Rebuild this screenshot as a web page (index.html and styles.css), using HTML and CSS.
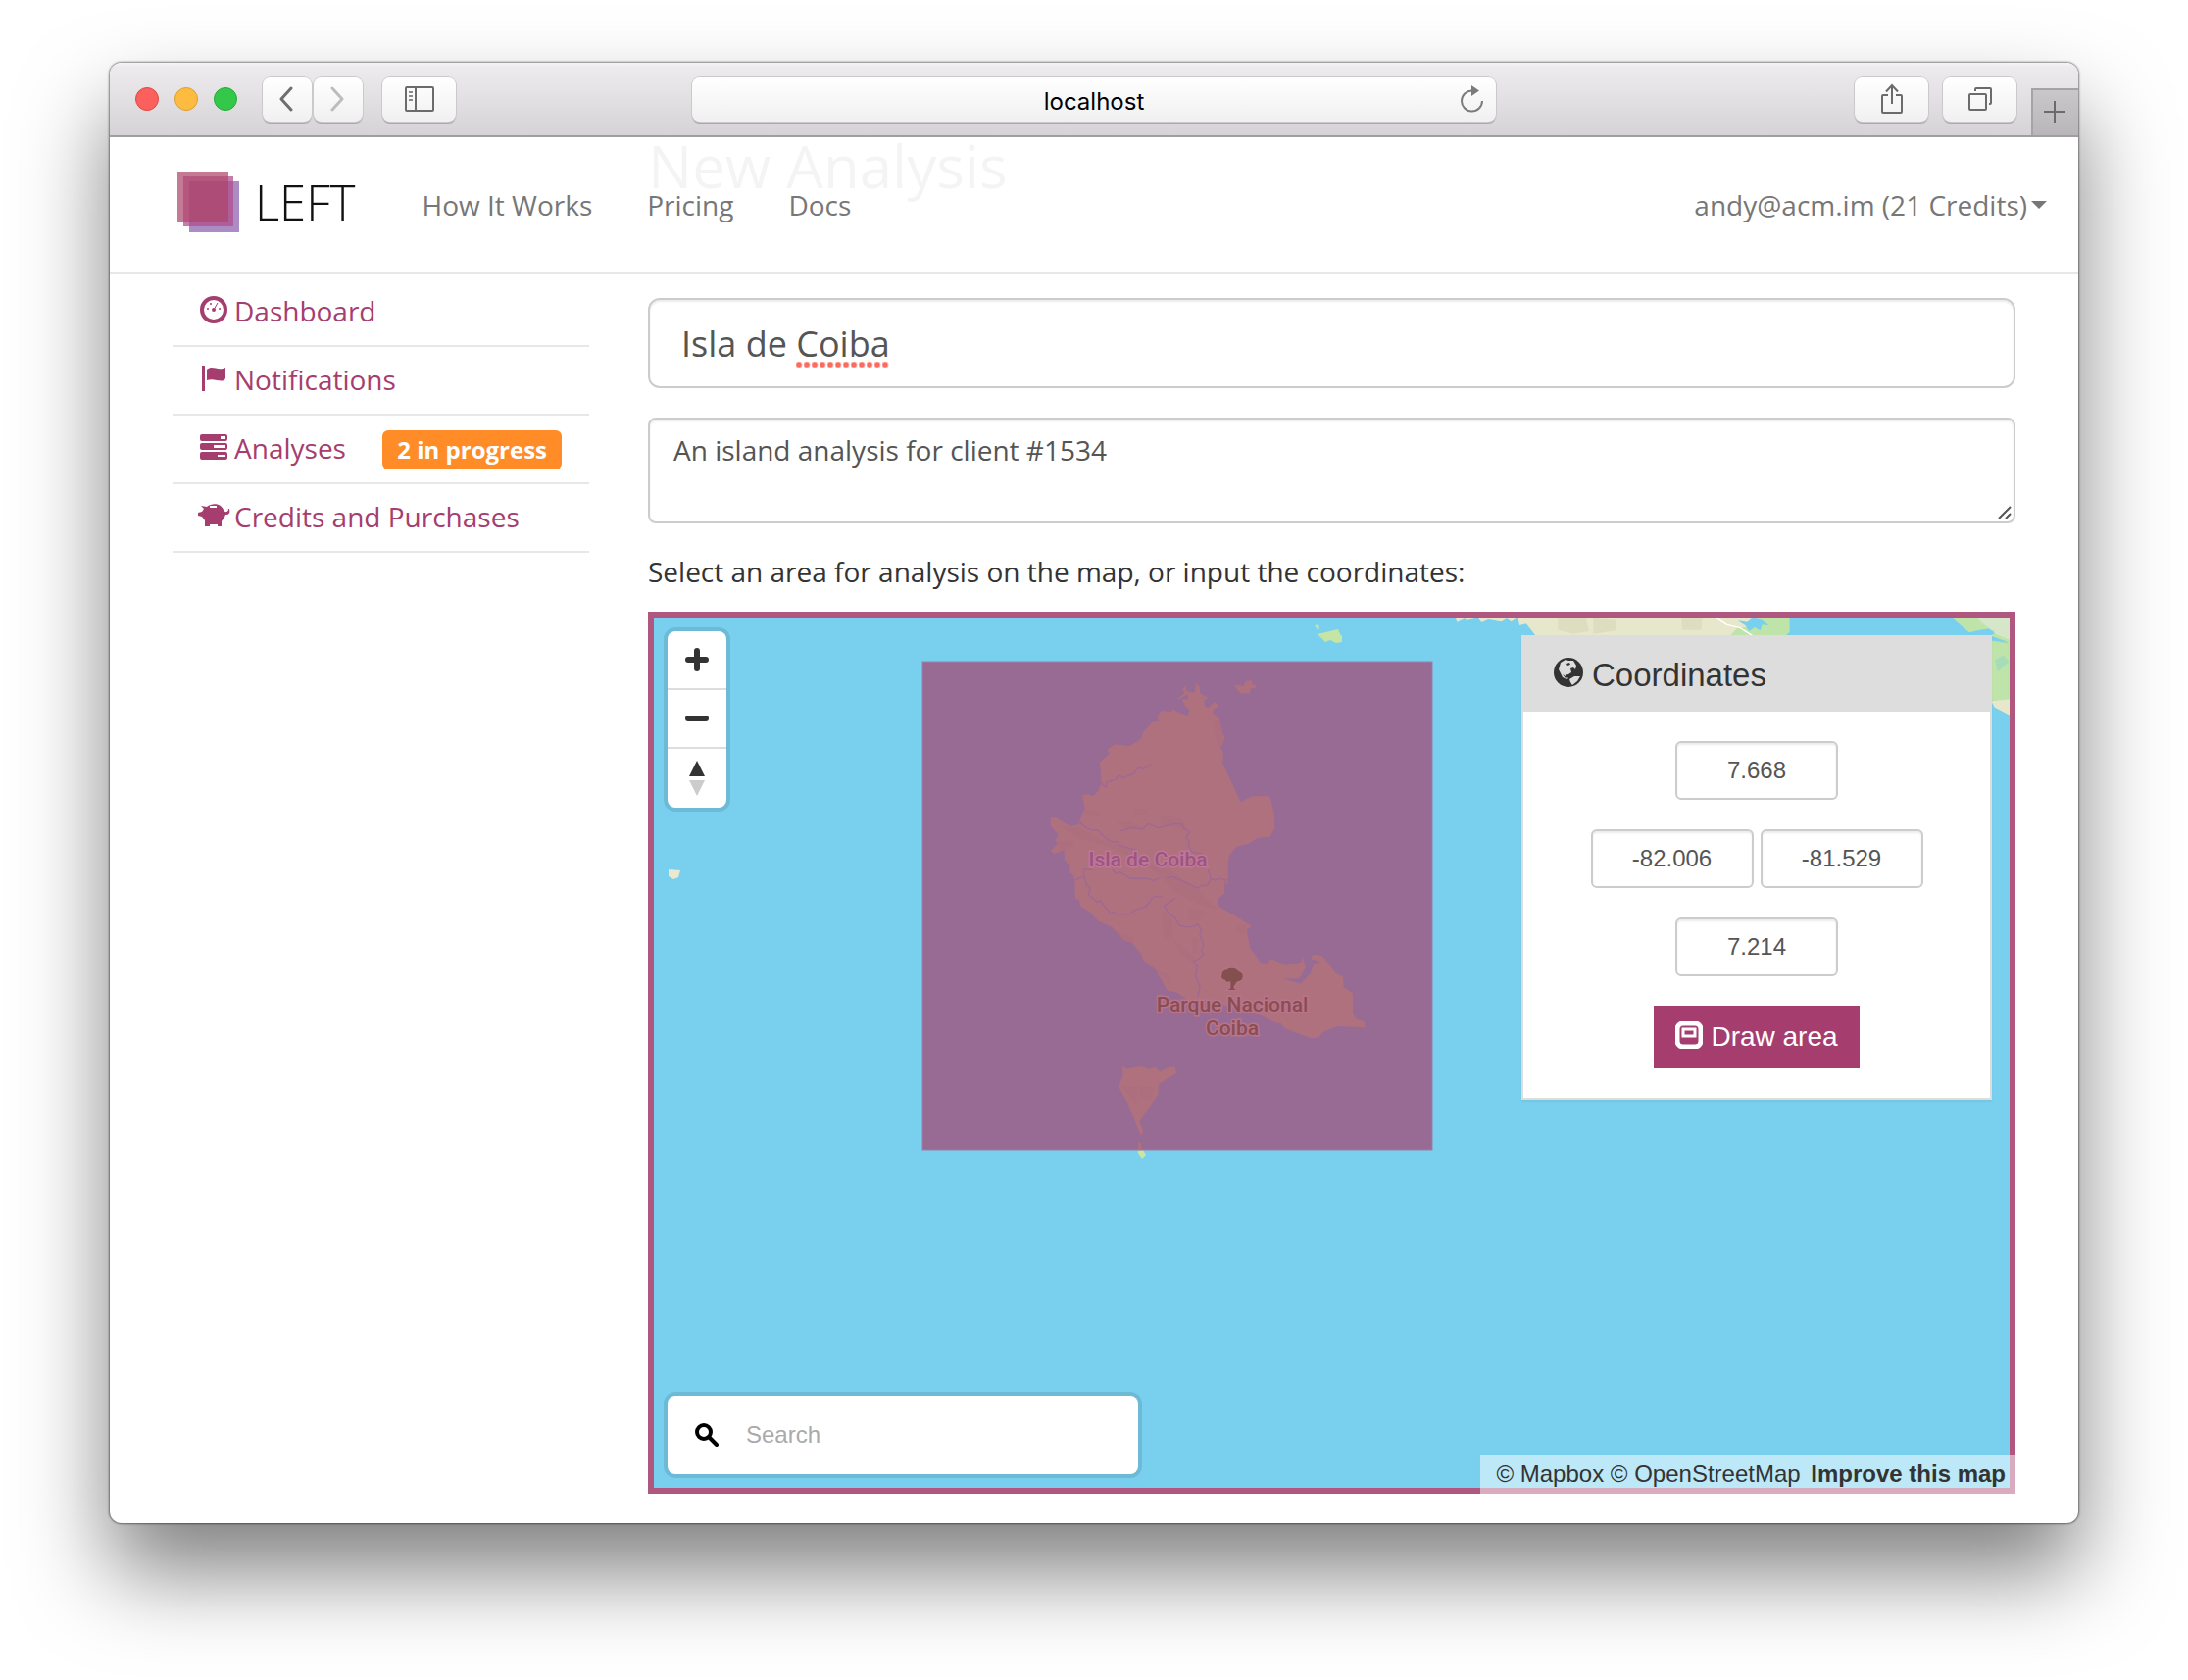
FILE: index.html
```html
<!DOCTYPE html>
<html lang="en">
<head>
<meta charset="utf-8">
<title>New Analysis - LEFT</title>
<link rel="stylesheet" href="styles.css">
</head>
<body>
<div class="window">
  <header class="toolbar">
    <div class="toolbar-left">
      <div class="lights"><span class="light light-red"></span><span class="light light-yellow"></span><span class="light light-green"></span></div>
      <div class="history">
        <button class="tool-button tool-history" type="button" aria-label="Back"><svg width="14" height="26" viewBox="0 0 14 26" fill="none" stroke="#6e6e6e" stroke-width="3" stroke-linecap="round" stroke-linejoin="round"><path d="M12 2 2 13l10 11"/></svg></button>
        <button class="tool-button tool-history" type="button" aria-label="Forward"><svg width="14" height="26" viewBox="0 0 14 26" fill="none" stroke="#bdbdbd" stroke-width="3" stroke-linecap="round" stroke-linejoin="round"><path d="M2 2l10 11L2 24"/></svg></button>
      </div>
      <button class="tool-button" type="button" aria-label="Show sidebar"><svg width="30" height="26" viewBox="0 0 30 26" fill="none" stroke="#6b6b6b" stroke-width="2"><rect x="1" y="1" width="28" height="24" rx="1"/><path d="M11 1v24"/><path stroke="#8a8a8a" d="M4 6h4M4 10h4M4 14h4"/></svg></button>
    </div>
    <div class="address">
      <span class="address-text">localhost</span>
      <button class="reload" type="button" aria-label="Reload"><svg width="24" height="28" viewBox="0 0 24 28"><path d="M22 16a10.5 10.5 0 1 1-10-10.500" fill="none" stroke="#7b7b7b" stroke-width="2"/><path d="M11 0l8 5.500L11 11z" fill="#7b7b7b"/></svg></button>
    </div>
    <div class="toolbar-right">
      <button class="tool-button" type="button" aria-label="Share"><svg width="24" height="32" viewBox="0 0 24 32" fill="none" stroke="#6b6b6b" stroke-width="2"><path d="M8 12H3a1 1 0 0 0-1 1v16a1 1 0 0 0 1 1h18a1 1 0 0 0 1-1V13a1 1 0 0 0-1-1h-5M12 21V2M6 8.500 12 2l6 6.500"/></svg></button>
      <button class="tool-button" type="button" aria-label="Show all tabs"><svg width="26" height="26" viewBox="0 0 26 26" fill="none" stroke="#6b6b6b" stroke-width="2"><rect x="2" y="8" width="17" height="16" rx="1"/><path d="M8 5V3a1 1 0 0 1 1-1h14a1 1 0 0 1 1 1v14a1 1 0 0 1-1 1h-1"/></svg></button>
      <button class="new-tab" type="button" aria-label="New tab"><svg width="22" height="22" viewBox="0 0 22 22" stroke="#6b6b6b" stroke-width="2"><path d="M11 0v22M0 11h22"/></svg></button>
    </div>
  </header>

  <div class="page">
    <nav class="navbar">
      <a class="brand" href="#">
        <svg width="63" height="62" viewBox="0 0 63 62"><rect x="12" y="10" width="51" height="52" fill="#ab8cc4"/><rect x="6" y="5" width="51" height="51" fill="#b04b8a" fill-opacity=".72"/><rect width="52" height="51" fill="#b04a70" fill-opacity=".74"/><rect x="12" y="10" width="40" height="41" fill="#ae4c78"/></svg>
        <span>LEFT</span>
      </a>
      <a class="nav-link" href="#">How It Works</a>
      <a class="nav-link" href="#">Pricing</a>
      <a class="nav-link" href="#">Docs</a>
      <a class="nav-link nav-user" href="#">andy@acm.im (21 Credits)<span class="caret"></span></a>
    </nav>

    <div class="columns">
      <aside class="sidebar">
        <a class="side-link" href="#"><svg class="side-icon" viewBox="0 0 28 28"><circle cx="14" cy="14" r="12" fill="none" stroke="currentColor" stroke-width="4"/><g fill="currentColor"><circle cx="14" cy="14" r="2"/><circle cx="8" cy="13" r="1"/><circle cx="11" cy="8" r="1"/><circle cx="20" cy="13" r="1"/></g><path d="M14 14l4-7" stroke="currentColor" stroke-width="1"/></svg>Dashboard</a>
        <a class="side-link" href="#"><svg class="side-icon" viewBox="0 0 28 28" fill="currentColor"><path d="M2 1h3v26H2zM7 5c6-5 11 2 19-2v11c-3 6-11-1-19 2z"/></svg>Notifications</a>
        <a class="side-link" href="#"><svg class="side-icon" viewBox="0 0 28 28"><g fill="currentColor"><rect y="1" width="28" height="7" rx="2"/><rect y="10" width="28" height="7" rx="2"/><rect y="19" width="28" height="8" rx="2"/></g><path d="M21 3h5v3h-5zM14 12h12v3H14zM18 22h8v2h-8z" fill="#fff"/></svg>Analyses <span class="badge">2 in progress</span></a>
        <a class="side-link" href="#"><svg class="side-icon" viewBox="0 0 28 28"><path d="M1 4l6 1C12 1 21 1 24 8c1 3 5 3 5-1h1c1 4 0 6-4 6-1 4-3 5-4 7v5h-4v-2h-8v2H5v-6l-3-4-4-1v-3l4-1 2-3z" fill="currentColor"/><path d="M10 4h7v2h-7z" fill="#fff"/></svg>Credits and Purchases</a>
      </aside>

      <main class="main">
        <h1 class="page-title">New Analysis</h1>
        <form class="form">
          <div class="field">
            <input class="control control-large" type="text" value="Isla de Coiba" aria-label="Analysis name" spellcheck="false">
            <span class="misspelling"></span>
          </div>
          <div class="field">
            <textarea class="control control-area" aria-label="Description" spellcheck="false">An island analysis for client #1534</textarea>
            <svg class="grip" width="14" height="14" viewBox="0 0 14 14" stroke="#555" stroke-width="2"><path d="M1 13 13 1M8 13l5-5"/></svg>
          </div>
          <p class="hint">Select an area for analysis on the map, or input the coordinates:</p>

          <div class="map">
            <svg class="map-canvas" viewBox="661 624 1395 900" preserveAspectRatio="xMinYMin slice">
              <rect x="661" y="624" width="1395" height="900" fill="#79d0ee"/>
              <path d="M682 887l12 1-2 7-5 2-5-3z" fill="#ebe8d2"/>
              <path d="M1341 638l4-1 1 4-2 2z" fill="#b8e4b4"/>
              <path d="M1344 647l21-5 2 5 2 2v6l-6 1-6-3-5 2z" fill="#c5e5a4"/>
              <g transform="translate(1480 610) scale(.3827 .3333)">
                <path d="M0 60l12 0 5 14 20-11 5 6 30-8 10 14 18-9 35 7 14-10 12 10 18-14 4 25 18-5 24 35H800L903 60z" fill="#e7e7cb"/>
                <path d="M285 62l75 0 8 40-42 8-40-12zM615 62h55l-2 36h-52zM380 62l62 6-4 32-58 10z" fill="#deddc0"/>
                <path d="M903 60v45l-10 10H745l20-25 30 0 30-30z" fill="#bfe4aa"/>
                <path d="M765 70l25 4 15-14 25 8 18 16-18-2-5 18-15-10-15 12-10-18z" fill="#79d0ee"/>
                <path d="M700 56l36 26 36 10 35 26" fill="none" stroke="#fff" stroke-width="4"/>
                <path d="M1336 60h156v300l-42-26-10-30V114l20-10-25-10-25 4-28 8-20-20z" fill="#bfe4aa"/>
                <path d="M1400 60h92v70l-40-20z" fill="#d6e6c9"/>
                <path d="M1440 316l52-6v50l-42-25z" fill="#e7e7cb"/>
                <path d="M1442 120l40 12 4 8-44-8zM1450 190l24-14 14 20-30 30z" fill="#a6dcb6"/>
                <path d="M1410 108l40-8-15 14 50 22-45-6-4-14z" fill="#79d0ee"/>
              </g>
              <path d="M1161 1170l3 0 5 8-4 4-4-6z" fill="#c9e6a4"/>
              <rect x="941" y="675" width="520" height="498" fill="#986b95"/>
              <rect x="941" y="675" width="520" height="498" fill="none" stroke="#9881a9"/>
              <g transform="translate(1000 660) scale(.3333 .3444)">
                <g fill="#b0717f">
                  <path d="M603 153L625 138 619 122 628 115 632 132 656 136 660 107 671 116 673 138 698 150 684 160 688 177 698 180 717 163 731 174 712 186V197L733 215 742 258 749 265 742 285 735 298 743 310 742 345 797 460 832 442H886L900 495 901 535 887 562 848 566 820 583 783 592 762 618 759 640 757 702 747 707V730L729 745V768L831 827 815 838 826 893 858 934 877 939 890 924 937 944 982 934 987 919 996 950 975 983 927 982 980 998 1010 968 1022 937 1046 936 1014 924V915L1027 911 1047 916 1088 966 1110 978 1112 1008 1140 1026V1085L1150 1102 1175 1110 1178 1127 1095 1124 1050 1140 1036 1156 1014 1159 932 1130 920 1114 910 1116 865 1094 750 1062 700 1045 640 1048 597 1021 573 1019 538 958 499 928 492 909 465 876 440 870 403 830 361 812 335 785 307 768 302 748H291L289 692 283 672 273 668 276 650 259 632 256 602 225 613 216 605 236 583 229 573 240 557 215 529V506H232L276 531 300 526 320 478 312 440 327 436 344 442 360 428 371 403 366 342 397 315 388 306 411 288 457 294 491 273 498 253 527 223 546 221 541 206 555 189 587 192V183L605 194 635 203 640 186 627 176 618 155H636L634 140 605 156Z"/>
                  <path d="M777 112l28 4 8-15 17-2 3 12 14 5-8 7-10-1-5 16-25-1-12-9z"/>
                  <path d="M435 1242l12 8 43-7 27 8 18-6 15 14 27-14h19l4 18-54 32-2 30-57 82 12 28-8 14-37-92-31-55 13-30z"/>
                  <path d="M484 1465l9 8-1 17h-8z"/>
                </g>
                <g fill="#a96b7b" fill-opacity=".5">
                  <path d="M240 530l60 5 70 38 90 25 65 48 60 20 70 45 70 65-40-7-85-40-60-60-80-50-90-35-70-18z"/>
                  <path d="M712 220l22 0 8 40-8 38-12-28zM320 478l46 10-3 18-40-8zM555 500l60 8 20 38-60-18-20 8zM413 515l45 5 40 15-50 8zM470 480h35l10 15-42 5zM237 576l50-2-5 18-35 14zM400 830l35 22 30 8 5 18-30-6zM556 785l30 22 5 60-28-7zM585 860l70 60-3 15-40-22zM640 775l50 8-20 28-35-6zM430 1300l50 5-2 50zM485 1300l45 5-5 40-40-8z"/>
                  <path d="M515 935l30 25 35 12 5 25-45-38zM650 860l18 8-5 40-15-6zM785 830l32-8-10 26-22 2z"/>
                </g>
                <g fill="none" stroke="#9f6893" stroke-width="4" stroke-linejoin="round">
                  <path d="M368 402l16 13 4-15 25-6 11-14 14 8 32-14 14-16 15 3 25-13"/>
                  <path d="M302 518l18 15 22 10h18l22 22 20 12h16l6 10 54 15M430 545l32-10 33 6 20-17 30 12 45-11h25l10 15 16 8-12 17 12 12-4 14 13 18 32 3"/>
                  <path d="M289 692l28-13-1-20 30 2M404 658l12 14 10-6 34 20h50l20 6 20-7M568 686l20-6 78 35 10-8h18l12-20 14 4 8-6 24 6-3 15M706 688l-9-28"/>
                  <path d="M317 679l10 30 10 3-6 22 28 22 8-4 26 32 5 8 9-8 10 8 40 0 16-12 35-12 22-28h30M597 745l-34 21 13 24 20 12 12 22 24 6 22-2 12-8 10 18-4 16 12 30-8 14 8 12-12 12-20 10 12 14-5 30 14 30-8 30"/>
                </g>
                <path d="M768 952c14-2 18 6 24 10 12 2 14 16 8 24-8 6-12 4-16 8l-8 12v6l8 4h-26l8-5v-20c-12 4-16-2-18-6-10 0-12-10-8-14-2-8 8-16 14-14 6-6 10-4 14-5z" fill="#83504f" stroke="#b97287" stroke-width="6" paint-order="stroke"/>
              </g>
              <g class="map-label">
                <text x="1171" y="884" class="map-label-island">Isla de Coiba</text>
                <text x="1257" y="1032">Parque Nacional</text>
                <text x="1257" y="1056">Coiba</text>
              </g>
            </svg>

            <div class="zoom">
              <button class="zoom-button" type="button" aria-label="Zoom in"><svg width="24" height="24" viewBox="0 0 24 24" stroke="#333" stroke-width="6" stroke-linecap="round"><path d="M12 3v18M3 12h18"/></svg></button>
              <button class="zoom-button" type="button" aria-label="Zoom out"><svg width="24" height="24" viewBox="0 0 24 24" stroke="#333" stroke-width="6" stroke-linecap="round"><path d="M3 12h18"/></svg></button>
              <button class="zoom-button" type="button" aria-label="Reset north"><svg width="16" height="36" viewBox="0 0 16 36"><path d="M8 0l8 16H0z" fill="#333"/><path d="M8 36 0 20h16z" fill="#ccc"/></svg></button>
            </div>

            <section class="panel">
              <h2 class="panel-title"><svg width="32" height="32" viewBox="0 0 32 32"><circle cx="16" cy="16" r="15" fill="#333"/><path d="M8 6l5-3 3 1 5 0 3 5-1 4-2-2-3 1 1 4-3 2-3 1 3 3-2 1-4-2-2-4-2-4zM17 23l5-3 6 0-3 5-5 4-2-3z" fill="#ddd"/><path d="M14 7l3-1 1 2-3 1zM10 18l3 2 2-2 1 3-3 1z" fill="#333"/></svg>Coordinates</h2>
              <div class="panel-body">
                <input class="coord" type="text" value="7.668" aria-label="North">
                <div class="coord-row">
                  <input class="coord" type="text" value="-82.006" aria-label="West">
                  <input class="coord" type="text" value="-81.529" aria-label="East">
                </div>
                <input class="coord" type="text" value="7.214" aria-label="South">
                <button class="draw" type="button"><svg width="28" height="28" viewBox="0 0 28 28" fill="none" stroke="#fff"><rect x="2" y="2" width="24" height="24" rx="6" stroke-width="5"/><rect x="8" y="8" width="12" height="7" stroke-width="3"/></svg>Draw area</button>
              </div>
            </section>

            <label class="search">
              <svg width="24" height="24" viewBox="0 0 24 24" fill="none" stroke="#000"><circle cx="9" cy="9" r="7" stroke-width="4"/><path d="M14 14l8 8" stroke-width="4" stroke-linecap="round"/></svg>
              <input class="search-input" type="text" placeholder="Search" aria-label="Search">
            </label>

            <div class="attribution"><a href="#">© Mapbox</a> <a href="#">© OpenStreetMap</a> <a class="improve" href="#">Improve this map</a></div>
          </div>
        </form>
      </main>
    </div>
  </div>
</div>
</body>
</html>
```
FILE: styles.css
```css
* { box-sizing: border-box; }

body {
  margin: 0;
  padding: 64px 112px 160px;
  background: #fff;
  color: #333;
  font: 28px/38px "Open Sans", "Noto Sans", sans-serif;
}

a { color: inherit; text-decoration: none; }
button, input, textarea { font: inherit; color: inherit; margin: 0; }
button { border: 0; padding: 0; cursor: pointer; }
svg { display: block; flex: none; }

.window {
  border-radius: 12px;
  background: #fff;
  box-shadow: 0 0 2px 1px rgba(0, 0, 0, .45), 0 50px 90px rgba(0, 0, 0, .5);
}

/* Browser toolbar */
.toolbar {
  display: grid;
  grid-template-columns: 1fr 820px 1fr;
  align-items: center;
  height: 76px;
  border-bottom: 2px solid #a09ea2;
  border-radius: 12px 12px 0 0;
  background: linear-gradient(#f6f6f6, #edebee 4px, #d5d3d6);
}
.toolbar-left, .toolbar-right, .lights, .history { display: flex; align-items: center; }
.toolbar-left { padding-left: 26px; }
.toolbar-right { justify-content: flex-end; height: 100%; gap: 15px; }
.lights { gap: 16px; margin-right: 26px; }
.light { width: 24px; height: 24px; border-radius: 50%; border: 1px solid; }
.light-red { background: #fc605c; border-color: #df4744; }
.light-yellow { background: #fdbc40; border-color: #de9f34; }
.light-green { background: #34c84a; border-color: #27aa35; }
.history { gap: 2px; margin-right: 20px; }
.tool-button, .address {
  display: flex;
  align-items: center;
  justify-content: center;
  width: 75px;
  height: 45px;
  border-radius: 8px;
  background: linear-gradient(#fff, #f0f0f1);
  box-shadow: 0 0 0 1px #cbc9cc, 0 2px 1px #a5a3a6;
}
.tool-history { width: 50px; padding-right: 3px; }
.address { position: relative; width: 100%; padding-top: 5px; color: #000; font: 24px/32px Inter, sans-serif; }
.reload { position: absolute; right: 12px; top: 8px; background: none; }
.new-tab {
  display: flex;
  align-items: center;
  justify-content: center;
  align-self: flex-end;
  width: 48px;
  height: 48px;
  padding: 0 2px 2px 0;
  border: solid #a5a3a6;
  border-width: 2px 0 0 2px;
  background: linear-gradient(#c9c7ca, #b8b6b9);
}

/* Site navigation, lying over the scrolled page */
.page { position: relative; }
.navbar {
  position: absolute;
  inset: 0 0 auto;
  display: flex;
  align-items: center;
  gap: 56px;
  height: 140px;
  padding: 0 32px 0 69px;
  border-bottom: 2px solid #e7e7e7;
  background: rgba(255, 255, 255, .95);
  color: #777;
}
.brand {
  display: flex;
  align-items: center;
  gap: 16px;
  margin: 0 12px 6px 0;
  color: #111;
  font: 300 49px/62px "Open Sans", sans-serif;
}
.nav-user { display: flex; align-items: center; gap: 4px; margin-left: auto; }
.caret { border: 8px solid transparent; border-top-color: #777; border-bottom: 0; }

.columns {
  display: grid;
  grid-template-columns: 425px minmax(0, 1fr);
  gap: 60px;
  padding: 0 64px 30px;
}
.sidebar { padding-top: 144px; color: #a63d6f; }
.side-link {
  display: flex;
  align-items: center;
  height: 70px;
  padding: 0 28px 2px;
  border-bottom: 2px solid #e7e7e7;
}
.side-icon { width: 28px; height: 28px; margin: 0 7px 2px 0; overflow: visible; }
.badge {
  margin: 4px 0 0 auto;
  padding: 0 15px;
  border-radius: 6px;
  background: #ff8c26;
  color: #fff;
  font-size: 24px;
  font-weight: 700;
  line-height: 40px;
}

/* Form */
.page-title {
  margin: 0 0 60px;
  padding-bottom: 44px;
  border-bottom: 2px solid #eee;
  font-size: 60px;
  font-weight: 400;
  line-height: 58px;
}
.form { display: flex; flex-direction: column; }
.field { position: relative; margin-bottom: 30px; }
.control {
  display: block;
  width: 100%;
  border: 2px solid #ccc;
  border-radius: 8px;
  background: #fff;
  box-shadow: inset 0 2px 2px rgba(0, 0, 0, .08);
  color: #555;
  resize: none;
  outline: 0;
}
.control-large { height: 92px; padding: 0 32px; border-radius: 12px; font-size: 36px; }
.control-area { height: 108px; padding: 12px 24px; }
.misspelling {
  position: absolute;
  left: 151px;
  top: 65px;
  width: 96px;
  height: 6px;
  background: radial-gradient(circle at 3px 3px, #fb6a5e 2px, transparent 4px) 0 0 / 8px 6px;
}
.grip { position: absolute; right: 4px; bottom: 4px; }
.hint { margin: 0 0 22px; }

/* Map */
.map {
  position: relative;
  height: 900px;
  color: #333;
  font: 24px/40px "Liberation Sans", Arial, sans-serif;
}
.map::after {
  content: "";
  position: absolute;
  inset: 0;
  border: 6px solid #b0577f;
  pointer-events: none;
}
.map-canvas { width: 100%; height: 100%; }
.map-label {
  font: 500 21px Roboto, sans-serif;
  text-anchor: middle;
  fill: #874f54;
  stroke: #bb7389;
  stroke-width: 3px;
  paint-order: stroke;
}
.map-label-island { fill: #9c5480; stroke: #bf7798; }
.zoom, .search {
  position: absolute;
  left: 20px;
  border-radius: 8px;
  background: #fff;
  box-shadow: 0 0 0 4px rgba(0, 0, 0, .1);
}
.zoom { top: 20px; width: 60px; }
.zoom-button {
  display: flex;
  align-items: center;
  justify-content: center;
  width: 60px;
  height: 60px;
  background: none;
}
.zoom-button:not(:last-child) { border-bottom: 2px solid #ddd; }
.search { bottom: 20px; display: flex; align-items: center; gap: 28px; width: 480px; height: 80px; padding: 0 28px; }
.search-input { flex: 1; min-width: 0; padding: 0; border: 0; outline: 0; background: none; }
.search-input::placeholder { color: #aaa; }
.panel {
  position: absolute;
  top: 24px;
  right: 24px;
  width: 480px;
  border: 2px solid #ddd;
  background: #fff;
  box-shadow: 0 2px 2px rgba(0, 0, 0, .05);
}
.panel-title {
  display: flex;
  align-items: center;
  gap: 8px;
  height: 76px;
  margin: 0;
  padding: 2px 30px 0;
  background: #ddd;
  font-size: 33px;
  font-weight: 400;
}
.panel-title svg { margin-bottom: 6px; }
.panel-body { display: flex; flex-direction: column; align-items: center; gap: 30px; padding: 30px; }
.coord-row { display: flex; gap: 7px; }
.coord {
  width: 166px;
  height: 60px;
  border: 2px solid #ccc;
  border-radius: 6px;
  background: #fff;
  box-shadow: inset 0 2px 2px rgba(0, 0, 0, .08);
  color: #555;
  text-align: center;
}
.draw {
  display: flex;
  align-items: center;
  justify-content: center;
  gap: 8px;
  width: 210px;
  height: 64px;
  background: #a63d6f;
  color: #fff;
  font-size: 28px;
}
.draw svg { margin-bottom: 4px; }
.attribution {
  position: absolute;
  right: 0;
  bottom: 0;
  z-index: 1;
  padding: 0 10px 0 16px;
  background: rgba(255, 255, 255, .5);
}
.improve { margin-left: 4px; font-weight: 700; }
```
